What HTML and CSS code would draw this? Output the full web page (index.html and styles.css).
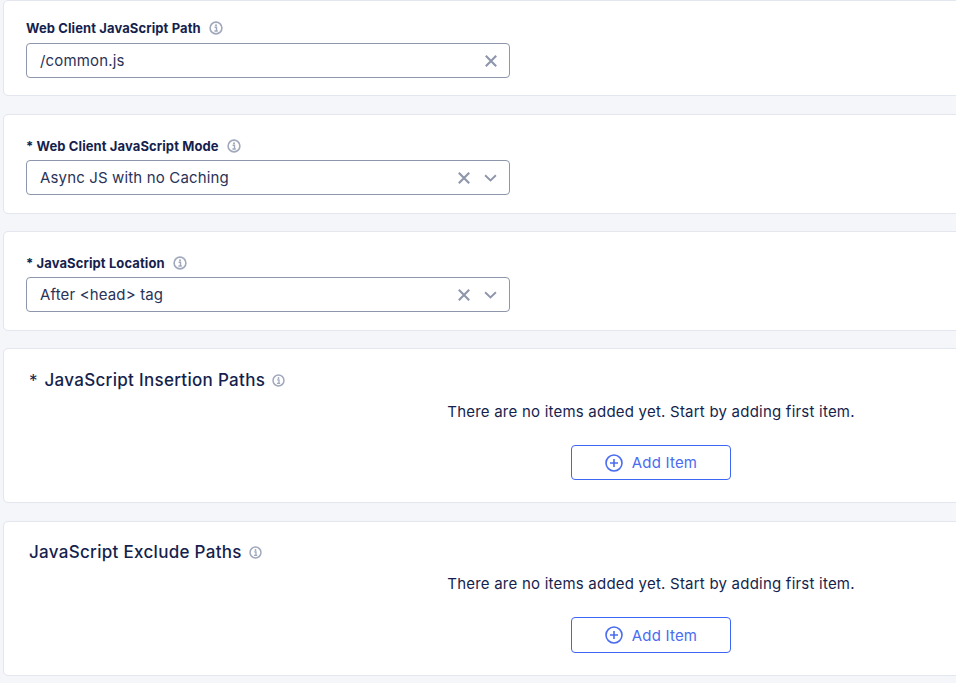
FILE: index.html
```html
<!DOCTYPE html>
<html lang="en">
<head>
<meta charset="utf-8">
<title>JavaScript settings</title>
<link rel="stylesheet" href="styles.css">
</head>
<body>
<svg class="sprites" width="0" height="0" aria-hidden="true">
  <symbol id="info" viewBox="0 0 14 14">
    <circle cx="7" cy="7" r="5.9" fill="none" stroke="currentColor" stroke-width="1.6"/>
    <circle cx="7" cy="4.3" r="1" fill="currentColor"/>
    <path d="M5.6 6.3H7.5V9.7M5.4 10H8.8" fill="none" stroke="currentColor" stroke-width="1.4"/>
  </symbol>
  <symbol id="close" viewBox="0 0 12 12">
    <path d="M0.8 0.8L11.2 11.2M11.2 0.8L0.8 11.2" fill="none" stroke="currentColor" stroke-width="2.1"/>
  </symbol>
  <symbol id="chevron" viewBox="0 0 12 8">
    <path d="M0.6 1.3L6 6.4L11.4 1.3" fill="none" stroke="currentColor" stroke-width="1.9"/>
  </symbol>
  <symbol id="plus" viewBox="0 0 18 18">
    <circle cx="9" cy="9" r="8" fill="none" stroke="currentColor" stroke-width="1.6"/>
    <path d="M9 5V13M5 9H13" fill="none" stroke="currentColor" stroke-width="1.6"/>
  </symbol>
</svg>
<main class="page">
  <section class="card card-first">
    <div class="label-row"><span class="label">Web Client JavaScript Path</span><svg class="info"><use href="#info"/></svg></div>
    <div class="field"><span class="value">/common.js</span><svg class="x"><use href="#close"/></svg></div>
  </section>
  <section class="card">
    <div class="label-row"><span class="label">* Web Client JavaScript Mode</span><svg class="info"><use href="#info"/></svg></div>
    <div class="field"><span class="value">Async JS with no Caching</span><svg class="x"><use href="#close"/></svg><svg class="chev"><use href="#chevron"/></svg></div>
  </section>
  <section class="card">
    <div class="label-row"><span class="label">* JavaScript Location</span><svg class="info"><use href="#info"/></svg></div>
    <div class="field"><span class="value">After &lt;head&gt; tag</span><svg class="x"><use href="#close"/></svg><svg class="chev"><use href="#chevron"/></svg></div>
  </section>
  <section class="card list-card">
    <div class="list-head"><span class="star">*</span><h2 class="list-title">JavaScript Insertion Paths</h2><svg class="info info-small"><use href="#info"/></svg></div>
    <div class="empty">
      <p class="empty-text">There are no items added yet. Start by adding first item.</p>
      <button class="add" type="button"><svg class="plus"><use href="#plus"/></svg>Add Item</button>
    </div>
  </section>
  <section class="card list-card list-last">
    <div class="list-head"><h2 class="list-title">JavaScript Exclude Paths</h2><svg class="info info-small"><use href="#info"/></svg></div>
    <div class="empty">
      <p class="empty-text">There are no items added yet. Start by adding first item.</p>
      <button class="add" type="button"><svg class="plus"><use href="#plus"/></svg>Add Item</button>
    </div>
  </section>
</main>
</body>
</html>
```
FILE: styles.css
```css
* { box-sizing: border-box; }
html, body { margin: 0; height: 100%; overflow: hidden; }
body {
  background: #f5f6f9;
  color: #161f4d;
  font-family: Inter, "Liberation Sans", sans-serif;
}
.sprites { position: absolute; }
.page {
  display: flex;
  flex-direction: column;
  gap: 17.5px;
  width: 1100px;
  padding-left: 3px;
}
.card {
  background: #fff;
  border: 1px solid #e3e5ef;
  border-radius: 5px;
  height: 99.5px;
  padding: 22px 22px 0;
}
.card-first { height: 96px; margin-bottom: 0.5px; padding-top: 18px; }
.card-first .field { margin-top: 6px; }
.label-row {
  display: flex;
  align-items: center;
  gap: 8px;
  height: 18px;
}
.label { font-size: 13px; font-weight: 700; letter-spacing: 0.1px; line-height: 18px; }
.info { width: 14px; height: 14px; color: #a0a8bc; }
.field {
  display: flex;
  align-items: center;
  width: 484px;
  height: 35px;
  margin-top: 5px;
  padding: 0 12px 0 13px;
  background: #fff;
  border: 1px solid #8e96ab;
  border-radius: 4px;
}
.value { flex: 1; font-size: 15px; letter-spacing: 0.15px; color: #2a3358; }
.x { width: 12px; height: 12px; color: #8e96ab; }
.chev { width: 13px; height: 8px; margin-left: 14px; color: #8e96ab; }
.list-card { height: 155px; padding: 21px 25px 0; }
.list-last { margin-top: 0.5px; padding-top: 20px; }
.list-last .add { height: 36px; }
.list-head { display: flex; align-items: center; height: 21px; }
.star { font-size: 17px; margin-right: 7px; }
.list-title { margin: 0; font-size: 17px; font-weight: 500; letter-spacing: 0.3px; line-height: 21px; }
.info-small { margin-left: 7px; width: 13px; height: 13px; }
.empty {
  display: flex;
  flex-direction: column;
  align-items: center;
  width: 408px;
  margin-top: 11px;
  margin-left: 418px;
}
.empty-text { margin: 0; font-size: 15px; letter-spacing: 0.22px; line-height: 20px; white-space: nowrap; }
.add {
  display: flex;
  align-items: center;
  justify-content: center;
  gap: 9px;
  width: 160px;
  height: 35px;
  margin-top: 23px;
  background: #fff;
  border: 1px solid #3d66f5;
  border-radius: 4px;
  color: #4a6cf0;
  font-family: inherit;
  font-size: 15px;
  letter-spacing: 0.2px;
}
.plus { width: 18px; height: 18px; }
```
